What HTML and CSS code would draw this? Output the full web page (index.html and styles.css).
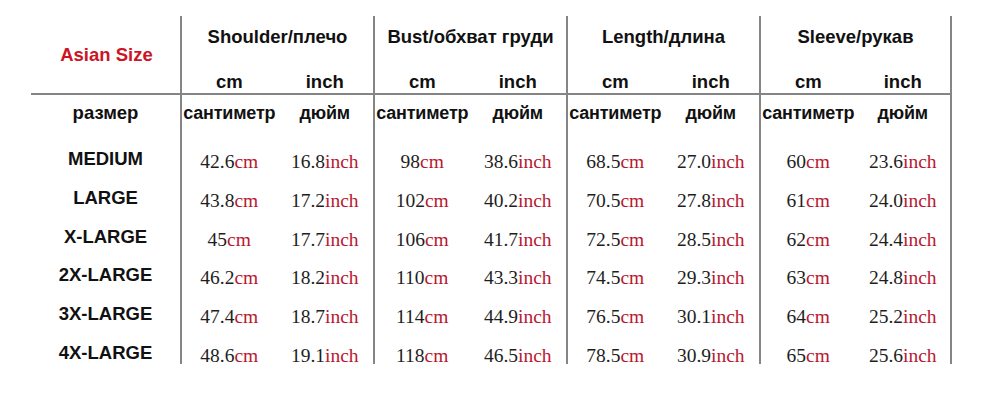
FILE: index.html
```html
<!DOCTYPE html>
<html lang="ru">
<head>
<meta charset="utf-8">
<title>Size chart</title>
<link rel="stylesheet" href="styles.css">
</head>
<body>
<div class="chart">
  <div class="corner">Asian Size</div>
  <div class="gtitle g">Shoulder/плечо</div>
  <div class="gtitle g">Bust/обхват груди</div>
  <div class="gtitle g">Length/длина</div>
  <div class="gtitle g end">Sleeve/рукав</div>

  <div class="sub g">cm</div><div class="sub">inch</div>
  <div class="sub g">cm</div><div class="sub">inch</div>
  <div class="sub g">cm</div><div class="sub">inch</div>
  <div class="sub g">cm</div><div class="sub end">inch</div>

  <div class="lab ruh">размер</div>
  <div class="ru g">сантиметр</div><div class="ru">дюйм</div>
  <div class="ru g">сантиметр</div><div class="ru">дюйм</div>
  <div class="ru g">сантиметр</div><div class="ru">дюйм</div>
  <div class="ru g">сантиметр</div><div class="ru end">дюйм</div>

  <div class="lab">MEDIUM</div>
  <div class="val g">42.6<span>cm</span></div><div class="val">16.8<span>inch</span></div>
  <div class="val g">98<span>cm</span></div><div class="val">38.6<span>inch</span></div>
  <div class="val g">68.5<span>cm</span></div><div class="val">27.0<span>inch</span></div>
  <div class="val g">60<span>cm</span></div><div class="val end">23.6<span>inch</span></div>

  <div class="lab">LARGE</div>
  <div class="val g">43.8<span>cm</span></div><div class="val">17.2<span>inch</span></div>
  <div class="val g">102<span>cm</span></div><div class="val">40.2<span>inch</span></div>
  <div class="val g">70.5<span>cm</span></div><div class="val">27.8<span>inch</span></div>
  <div class="val g">61<span>cm</span></div><div class="val end">24.0<span>inch</span></div>

  <div class="lab">X-LARGE</div>
  <div class="val g">45<span>cm</span></div><div class="val">17.7<span>inch</span></div>
  <div class="val g">106<span>cm</span></div><div class="val">41.7<span>inch</span></div>
  <div class="val g">72.5<span>cm</span></div><div class="val">28.5<span>inch</span></div>
  <div class="val g">62<span>cm</span></div><div class="val end">24.4<span>inch</span></div>

  <div class="lab">2X-LARGE</div>
  <div class="val g">46.2<span>cm</span></div><div class="val">18.2<span>inch</span></div>
  <div class="val g">110<span>cm</span></div><div class="val">43.3<span>inch</span></div>
  <div class="val g">74.5<span>cm</span></div><div class="val">29.3<span>inch</span></div>
  <div class="val g">63<span>cm</span></div><div class="val end">24.8<span>inch</span></div>

  <div class="lab">3X-LARGE</div>
  <div class="val g">47.4<span>cm</span></div><div class="val">18.7<span>inch</span></div>
  <div class="val g">114<span>cm</span></div><div class="val">44.9<span>inch</span></div>
  <div class="val g">76.5<span>cm</span></div><div class="val">30.1<span>inch</span></div>
  <div class="val g">64<span>cm</span></div><div class="val end">25.2<span>inch</span></div>

  <div class="lab">4X-LARGE</div>
  <div class="val g">48.6<span>cm</span></div><div class="val">19.1<span>inch</span></div>
  <div class="val g">118<span>cm</span></div><div class="val">46.5<span>inch</span></div>
  <div class="val g">78.5<span>cm</span></div><div class="val">30.9<span>inch</span></div>
  <div class="val g">65<span>cm</span></div><div class="val end">25.6<span>inch</span></div>
</div>
</body>
</html>
```

FILE: styles.css
```css
html, body {
  margin: 0;
  padding: 0;
  background: #ffffff;
}

body {
  width: 1000px;
  height: 406px;
  overflow: hidden;
  font-family: "Liberation Sans", Arial, sans-serif;
}

.chart {
  display: grid;
  grid-template-columns: 149px repeat(8, 96.5px);
  grid-template-rows: 46px 33px 45px repeat(5, 38.8px) 30px;
  margin: 16px 0 0 31px;
  width: 921px;
}

.chart > div {
  box-sizing: border-box;
  text-align: center;
  white-space: nowrap;
}

.g {
  border-left: 2px solid #858585;
}

.end {
  border-right: 2px solid #858585;
}

.corner {
  grid-row: 1 / 3;
  display: flex;
  align-items: center;
  justify-content: center;
  color: #cc1424;
  font-weight: bold;
  font-size: 18.5px;
  border-bottom: 2px solid #858585;
  padding-left: 2px;
}

.gtitle {
  grid-column: span 2;
  font-weight: bold;
  font-size: 18.5px;
  line-height: 42px;
  color: #111111;
}

.sub {
  font-weight: bold;
  font-size: 18.5px;
  line-height: 22px;
  padding-top: 9px;
  color: #111111;
  border-bottom: 2px solid #858585;
}

.lab {
  font-weight: bold;
  font-size: 18.5px;
  line-height: 38.8px;
  color: #111111;
}

.ruh {
  line-height: 36px;
}

.ru {
  font-weight: bold;
  font-size: 18px;
  line-height: 36px;
  color: #111111;
  letter-spacing: -0.2px;
}

.val {
  font-family: "Liberation Serif", "Times New Roman", serif;
  font-size: 19.5px;
  line-height: 38.8px;
  padding-top: 3px;
  color: #1e1e1e;
}

.val span {
  color: #b8172f;
}
```
